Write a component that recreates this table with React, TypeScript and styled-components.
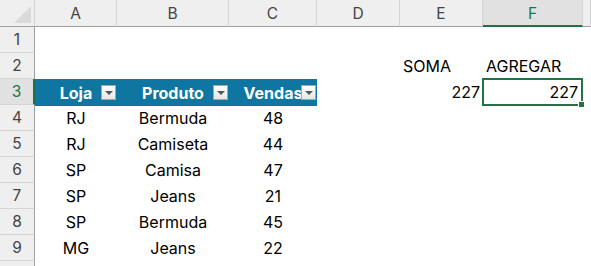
import React from "react"
import styled, { createGlobalStyle, css } from "styled-components"

const GlobalStyle = createGlobalStyle`
  html, body {
    margin: 0;
    padding: 0;
    background: #ffffff;
    overflow: hidden;
  }
  body {
    font-family: "Inter", "Liberation Sans", sans-serif;
  }
`

const GREEN = "#217346"
const TABLE_BLUE = "#0e76a0"

const Sheet = styled.div`
  display: grid;
  grid-template-columns: 35px 82px 112px 88px 83px 83px 100px 1fr;
  grid-template-rows: 27px;
  grid-auto-rows: 26px;
  width: 591px;
  height: 266px;
  overflow: hidden;
`

const Corner = styled.div`
  position: relative;
  background: #efefef;
  border-right: 1px solid #d0d0d0;
  border-bottom: 1px solid #9f9f9f;
  &::after {
    content: "";
    position: absolute;
    right: 3px;
    bottom: 3px;
    width: 0;
    height: 0;
    border-left: 17px solid transparent;
    border-bottom: 17px solid #dadada;
  }
`

const ColHead = styled.div<{ $active?: boolean }>`
  display: flex;
  align-items: center;
  justify-content: center;
  background: ${(p) => (p.$active ? "#e1e1e1" : "#efefef")};
  color: ${(p) => (p.$active ? GREEN : "#444444")};
  border-right: 1px solid #d4d4d4;
  border-bottom: ${(p) => (p.$active ? `2px solid ${GREEN}` : "1px solid #9f9f9f")};
  font-size: 15.5px;
  box-sizing: border-box;
  padding-top: ${(p) => (p.$active ? "1px" : "0")};
`

const RowHead = styled.div<{ $active?: boolean }>`
  display: flex;
  align-items: center;
  justify-content: center;
  background: ${(p) => (p.$active ? "#e1e1e1" : "#efefef")};
  color: ${(p) => (p.$active ? GREEN : "#444444")};
  border-bottom: 1px solid #d4d4d4;
  border-right: ${(p) => (p.$active ? `2px solid ${GREEN}` : "1px solid #9f9f9f")};
  font-size: 15.5px;
  box-sizing: border-box;
`

type Align = "left" | "center" | "right"

const Cell = styled.div<{ $align?: Align; $head?: boolean; $selected?: boolean }>`
  position: relative;
  display: flex;
  align-items: center;
  justify-content: ${(p) =>
    p.$align === "right" ? "flex-end" : p.$align === "center" ? "center" : "flex-start"};
  padding: 0 3px;
  box-sizing: border-box;
  font-size: 16px;
  color: #000000;
  white-space: nowrap;
  ${(p) =>
    p.$head &&
    css`
      background: ${TABLE_BLUE};
      color: #ffffff;
      font-weight: 700;
      height: 27px;
    `}
  ${(p) =>
    p.$selected &&
    css`
      border: 2px solid ${GREEN};
      margin: -1px 0 -1px -1px;
      height: 28px;
    `}
`

const FilterButton = styled.span`
  position: absolute;
  right: 1px;
  top: 6px;
  width: 15px;
  height: 15px;
  box-sizing: border-box;
  background: linear-gradient(#ffffff, #e6e6e6);
  border: 1px solid #a6a6a6;
  &::after {
    content: "";
    position: absolute;
    left: 3px;
    top: 5px;
    border-left: 4px solid transparent;
    border-right: 4px solid transparent;
    border-top: 4px solid #555555;
  }
`

const FillHandle = styled.span`
  position: absolute;
  right: -4px;
  bottom: -4px;
  width: 5px;
  height: 5px;
  background: ${GREEN};
  border: 1px solid #ffffff;
`

const columns = ["A", "B", "C", "D", "E", "F", ""]

const rows: [string, string, string][] = [
  ["RJ", "Bermuda", "48"],
  ["RJ", "Camiseta", "44"],
  ["SP", "Camisa", "47"],
  ["SP", "Jeans", "21"],
  ["SP", "Bermuda", "45"],
  ["MG", "Jeans", "22"],
]

const Blank = () => <Cell />

export default function App() {
  return (
    <>
      <GlobalStyle />
      <Sheet>
        <Corner />
        {columns.map((c, i) => (
          <ColHead key={i} $active={c === "F"}>
            {c}
          </ColHead>
        ))}

        <RowHead>1</RowHead>
        {columns.map((_, i) => (
          <Blank key={i} />
        ))}

        <RowHead>2</RowHead>
        <Blank />
        <Blank />
        <Blank />
        <Blank />
        <Cell>SOMA</Cell>
        <Cell>AGREGAR</Cell>
        <Blank />

        <RowHead $active>3</RowHead>
        {["Loja", "Produto", "Vendas"].map((h) => (
          <Cell key={h} $head $align="center">
            {h}
            <FilterButton />
          </Cell>
        ))}
        <Blank />
        <Cell $align="right">227</Cell>
        <Cell $align="right" $selected>
          227
          <FillHandle />
        </Cell>
        <Blank />

        {rows.map((r, i) => (
          <React.Fragment key={i}>
            <RowHead>{i + 4}</RowHead>
            <Cell $align="center">{r[0]}</Cell>
            <Cell $align="center">{r[1]}</Cell>
            <Cell $align="center">{r[2]}</Cell>
            <Blank />
            <Blank />
            <Blank />
            <Blank />
          </React.Fragment>
        ))}

        <RowHead />
      </Sheet>
    </>
  )
}
